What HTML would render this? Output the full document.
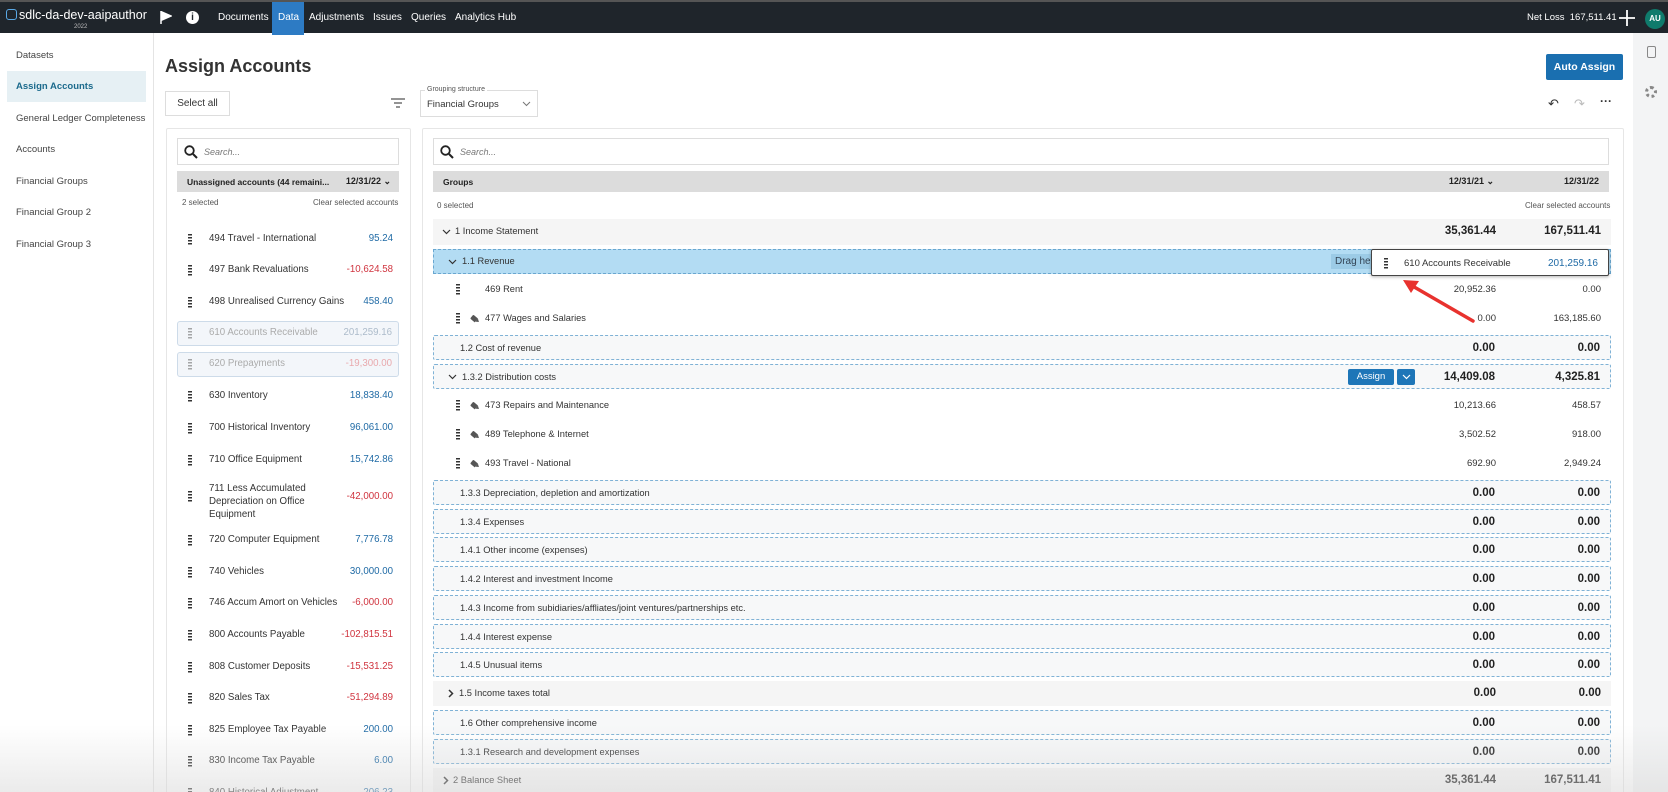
<!DOCTYPE html>
<html><head><meta charset="utf-8"><style>
*{box-sizing:border-box;margin:0;padding:0}
html,body{width:1668px;height:792px;overflow:hidden}
body{background:#fff;font-family:"Liberation Sans",sans-serif;color:#333;font-size:11px;white-space:nowrap}
#w{position:relative;width:1668px;height:792px;overflow:hidden}
.a{position:absolute}
.top{left:0;top:0;width:1668px;height:33px;background:#1f252b;border-top:2px solid #555}
.top .t{color:#fff;font-size:10px;top:10px}
.side{left:0;top:33px;width:154px;height:759px;background:#fff;border-right:1px solid #e4e4e4}
.side div{position:absolute;left:16px;font-size:9.5px;color:#444}
.rs{left:1633px;top:33px;width:35px;height:759px;background:#f3f4f5}
.panel{border:1px solid #e6e6e6;background:#fff;border-radius:2px}
.search{border:1px solid #ddd;background:#fff;height:27px}
.search span{position:absolute;left:26px;top:8px;font-style:italic;color:#777;font-size:9px}
.hdr{background:#dcdcdc;height:21px;font-weight:bold;font-size:8.5px;color:#222}
.grip{position:absolute;width:4px;height:11px;background:repeating-linear-gradient(#333 0 1.5px,transparent 1.5px 3px)}
.lrow{position:absolute;left:177px;width:222px;height:25px}
.lrow .n{position:absolute;left:32px;top:6px;font-size:9.7px;color:#333}
.lrow .v{position:absolute;right:6px;top:6px;font-size:9.7px}
.blue{color:#1f6aa5}.red{color:#d0343f}
.grow{position:absolute;left:433px;width:1178px;height:25px}
.grow .n{position:absolute;top:7px;font-size:9.3px;color:#333}
.grow .c1,.grow .c2{position:absolute;top:6px;font-size:11.5px;font-weight:bold;color:#222;text-align:right}
.grow .c1{right:115px}.grow .c2{right:10px}
.grow .s1,.grow .s2{position:absolute;top:7px;font-size:9.5px;color:#333}
.grow .s1{right:115px}.grow .s2{right:10px}
.dash{border:1px dashed #7fb2d6;border-radius:2px;background:#f7f8f9}
.gray{background:#f5f5f5}
.tag{position:absolute;width:6px;height:5px;background:#555;border-radius:1px 0 0 1px;transform:rotate(40deg)}
.tag:after{content:"";position:absolute;left:6px;top:0;border-left:3px solid #555;border-top:2.5px solid transparent;border-bottom:2.5px solid transparent}
.cv{position:absolute}
</style></head><body><div id="w">
<div class="a top">
 <div class="a" style="left:6px;top:7px;width:11px;height:11px;border:1.5px solid #5aa9e6;border-radius:3px"></div>
 <div class="a t" style="left:19px;top:6px;font-size:12.5px">sdlc-da-dev-aaipauthor</div>
 <div class="a" style="left:74px;top:22px;color:#bbb;font-size:6px">2022</div>
 <svg class="a" style="left:160px;top:9px" width="12" height="13"><path d="M1 0v13M2 1l9 4-9 4z" stroke="#fff" fill="#fff" stroke-width="1.5"/></svg>
 <div class="a" style="left:186px;top:9px;width:13px;height:13px;border-radius:50%;background:#fff;color:#1f252b;font-weight:bold;font-size:10px;text-align:center;line-height:13px">i</div>
 <div class="a t" style="left:218px">Documents</div>
 <div class="a" style="left:272px;top:0;width:32px;height:33px;background:#2d7bc4"></div>
 <div class="a t" style="left:278px">Data</div>
 <div class="a t" style="left:309px">Adjustments</div>
 <div class="a t" style="left:373px">Issues</div>
 <div class="a t" style="left:411px">Queries</div>
 <div class="a t" style="left:455px">Analytics Hub</div>
 <div class="a t" style="left:1527px;font-size:9.5px">Net Loss&nbsp;&nbsp;167,511.41</div>
 <svg class="a" style="left:1619px;top:8px" width="16" height="16"><path d="M8 0v16M0 8h16" stroke="#fff" stroke-width="1.8"/></svg>
 <div class="a" style="left:1645px;top:7px;width:20px;height:20px;border-radius:50%;background:#0f7b6c;color:#fff;font-size:8px;text-align:center;line-height:20px;font-weight:bold">AU</div>
</div>
<div class="a side">
 <div style="top:17px">Datasets</div>
 <div style="left:7px;top:38px;width:139px;height:31px;background:#e6f0f4"></div>
 <div style="top:48px;color:#1b6a8c;font-weight:bold">Assign Accounts</div>
 <div style="top:80px">General Ledger Completeness</div>
 <div style="top:111px">Accounts</div>
 <div style="top:143px">Financial Groups</div>
 <div style="top:174px">Financial Group 2</div>
 <div style="top:206px">Financial Group 3</div>
</div>
<div class="a rs">
 <div class="a" style="left:14px;top:13px;width:9px;height:12px;border:1.5px solid #888;border-radius:2px"></div>
 <div class="a" style="left:12px;top:53px;width:12px;height:12px;border-radius:50%;border:3px dotted #888"></div>
</div>
<div class="a" style="left:165px;top:56px;font-size:18px;font-weight:bold;color:#333">Assign Accounts</div>
<div class="a" style="left:165px;top:91px;width:65px;height:25px;border:1px solid #ddd;font-size:10px;text-align:center;line-height:23px">Select all</div>
<svg class="a" style="left:391px;top:98px" width="14" height="10"><path d="M0 1h14M3 5h8M5 9h4" stroke="#555" stroke-width="1.3"/></svg>
<div class="a" style="left:420px;top:90px;width:118px;height:27px;border:1px solid #ddd"></div>
<div class="a" style="left:425px;top:86px;font-size:7px;color:#555;background:#fff;padding:0 2px">Grouping structure</div>
<div class="a" style="left:427px;top:99px;font-size:9.5px">Financial Groups</div>
<svg class="a" style="left:522px;top:101px" width="9" height="6"><path d="M1 1l3.5 3.5L8 1" stroke="#777" fill="none"/></svg>
<div class="a" style="left:1546px;top:54px;width:77px;height:26px;background:#1a6fb0;border-radius:2px;color:#fff;font-weight:bold;font-size:10.5px;text-align:center;line-height:26px">Auto Assign</div>
<div class="a" style="left:1548px;top:96px;font-size:13px;color:#333">&#8630;</div>
<div class="a" style="left:1574px;top:96px;font-size:13px;color:#bbb">&#8631;</div>
<div class="a" style="left:1600px;top:94px;font-size:12px;color:#333;font-weight:bold">&middot;&middot;&middot;</div>

<div class="a panel" style="left:166px;top:128px;width:245px;height:680px"></div>
<div class="a search" style="left:177px;top:138px;width:222px"><svg class="a" style="left:6px;top:6px" width="14" height="14"><circle cx="5.5" cy="5.5" r="4.3" stroke="#222" stroke-width="1.8" fill="none"/><path d="M9 9l4 4" stroke="#222" stroke-width="2"/></svg><span>Search...</span></div>
<div class="a hdr" style="left:177px;top:171px;width:222px"><span class="a" style="left:10px;top:6px">Unassigned accounts (44 remaini...</span><span class="a" style="right:8px;top:5px;font-size:9px">12/31/22 &#8964;</span></div>
<div class="a" style="left:182px;top:198px;font-size:8px;color:#555">2 selected</div>
<div class="a" style="left:313px;top:198px;font-size:8px;color:#555">Clear selected accounts</div>

<div class="lrow" style="top:227px"><i class="grip" style="left:11px;top:7px"></i><span class="n">494 Travel - International</span><span class="v blue">95.24</span></div>
<div class="lrow" style="top:258px"><i class="grip" style="left:11px;top:7px"></i><span class="n">497 Bank Revaluations</span><span class="v red">-10,624.58</span></div>
<div class="lrow" style="top:290px"><i class="grip" style="left:11px;top:7px"></i><span class="n">498 Unrealised Currency Gains</span><span class="v blue">458.40</span></div>
<div class="lrow" style="top:321px;background:#eef3f8;border:1px solid #b9cde0;border-radius:3px;opacity:.7"><i class="grip" style="left:10px;top:6px;opacity:.6"></i><span class="n" style="left:31px;top:5px;color:#888">610 Accounts Receivable</span><span class="v blue" style="top:5px;color:#8a9fb5">201,259.16</span></div>
<div class="lrow" style="top:352px;background:#eef3f8;border:1px solid #b9cde0;border-radius:3px;opacity:.7"><i class="grip" style="left:10px;top:6px;opacity:.6"></i><span class="n" style="left:31px;top:5px;color:#888">620 Prepayments</span><span class="v" style="top:5px;color:#e0858b">-19,300.00</span></div>
<div class="lrow" style="top:384px"><i class="grip" style="left:11px;top:7px"></i><span class="n">630 Inventory</span><span class="v blue">18,838.40</span></div>
<div class="lrow" style="top:416px"><i class="grip" style="left:11px;top:7px"></i><span class="n">700 Historical Inventory</span><span class="v blue">96,061.00</span></div>
<div class="lrow" style="top:448px"><i class="grip" style="left:11px;top:7px"></i><span class="n">710 Office Equipment</span><span class="v blue">15,742.86</span></div>
<div class="lrow" style="top:482px;height:40px"><i class="grip" style="left:11px;top:9px"></i><span class="n" style="top:0;line-height:13px">711 Less Accumulated<br>Depreciation on Office<br>Equipment</span><span class="v red" style="top:9px">-42,000.00</span></div>
<div class="lrow" style="top:528px"><i class="grip" style="left:11px;top:7px"></i><span class="n">720 Computer Equipment</span><span class="v blue">7,776.78</span></div>
<div class="lrow" style="top:560px"><i class="grip" style="left:11px;top:7px"></i><span class="n">740 Vehicles</span><span class="v blue">30,000.00</span></div>
<div class="lrow" style="top:591px"><i class="grip" style="left:11px;top:7px"></i><span class="n">746 Accum Amort on Vehicles</span><span class="v red">-6,000.00</span></div>
<div class="lrow" style="top:623px"><i class="grip" style="left:11px;top:7px"></i><span class="n">800 Accounts Payable</span><span class="v red">-102,815.51</span></div>
<div class="lrow" style="top:655px"><i class="grip" style="left:11px;top:7px"></i><span class="n">808 Customer Deposits</span><span class="v red">-15,531.25</span></div>
<div class="lrow" style="top:686px"><i class="grip" style="left:11px;top:7px"></i><span class="n">820 Sales Tax</span><span class="v red">-51,294.89</span></div>
<div class="lrow" style="top:718px"><i class="grip" style="left:11px;top:7px"></i><span class="n">825 Employee Tax Payable</span><span class="v blue">200.00</span></div>
<div class="lrow" style="top:749px"><i class="grip" style="left:11px;top:7px"></i><span class="n">830 Income Tax Payable</span><span class="v blue">6.00</span></div>
<div class="lrow" style="top:781px"><i class="grip" style="left:11px;top:7px"></i><span class="n">840 Historical Adjustment</span><span class="v blue">206.23</span></div>

<div class="a panel" style="left:422px;top:128px;width:1202px;height:680px"></div>
<div class="a search" style="left:433px;top:138px;width:1176px"><svg class="a" style="left:6px;top:6px" width="14" height="14"><circle cx="5.5" cy="5.5" r="4.3" stroke="#222" stroke-width="1.8" fill="none"/><path d="M9 9l4 4" stroke="#222" stroke-width="2"/></svg><span>Search...</span></div>
<div class="a hdr" style="left:433px;top:171px;width:1176px"><span class="a" style="left:10px;top:6px">Groups</span><span class="a" style="right:115px;top:5px;font-size:9px">12/31/21 &#8964;</span><span class="a" style="right:10px;top:5px;font-size:9px">12/31/22</span></div>
<div class="a" style="left:437px;top:201px;font-size:8px;color:#555">0 selected</div>
<div class="a" style="left:1525px;top:201px;font-size:8px;color:#555">Clear selected accounts</div>

<div class="grow gray" style="top:219px;height:26px"><svg class="cv" style="left:9px;top:10px" width="9" height="6"><path d="M1 1l3.5 3.5L8 1" stroke="#333" fill="none" stroke-width="1.2"/></svg><span class="n" style="left:22px;top:7px">1 Income Statement</span><span class="c1" style="top:6px">35,361.44</span><span class="c2" style="top:6px">167,511.41</span></div>
<div class="grow" style="top:249px;background:#b3dcf3;border:1px dashed #6aa7d0"><svg class="cv" style="left:14px;top:9px" width="9" height="6"><path d="M1 1l3.5 3.5L8 1" stroke="#333" fill="none" stroke-width="1.2"/></svg><span class="n" style="left:28px;top:6px">1.1 Revenue</span><span class="a" style="left:897px;top:4px;padding:2px 4px;background:#9ccbe6;color:#345;font-size:10px">Drag here</span><span class="a" style="right:4px;top:6px;font-size:10px;color:#345">ns</span></div>
<div class="grow" style="top:277px"><i class="grip" style="left:23px;top:7px"></i><span class="n" style="left:52px">469 Rent</span><span class="s1">20,952.36</span><span class="s2">0.00</span></div>
<div class="grow" style="top:306px"><i class="grip" style="left:23px;top:7px"></i><i class="tag" style="left:38px;top:10px"></i><span class="n" style="left:52px">477 Wages and Salaries</span><span class="s1">0.00</span><span class="s2">163,185.60</span></div>
<div class="grow dash" style="top:335px"><span class="n" style="left:26px">1.2 Cost of revenue</span><span class="c1">0.00</span><span class="c2">0.00</span></div>
<div class="grow dash" style="top:364px"><svg class="cv" style="left:14px;top:9px" width="9" height="6"><path d="M1 1l3.5 3.5L8 1" stroke="#333" fill="none" stroke-width="1.2"/></svg><span class="n" style="left:28px">1.3.2 Distribution costs</span><span class="a" style="left:914px;top:4px;width:46px;height:16px;background:#1e76b8;color:#fff;font-size:9.5px;text-align:center;line-height:16px;border-radius:2px">Assign</span><span class="a" style="left:963px;top:4px;width:18px;height:16px;background:#1e76b8;border-radius:2px"><svg class="cv" style="left:5px;top:5px" width="9" height="6"><path d="M1 1l3.5 3.5L8 1" stroke="#fff" fill="none" stroke-width="1.2"/></svg></span><span class="c1">14,409.08</span><span class="c2">4,325.81</span></div>
<div class="grow" style="top:393px"><i class="grip" style="left:23px;top:7px"></i><i class="tag" style="left:38px;top:10px"></i><span class="n" style="left:52px">473 Repairs and Maintenance</span><span class="s1">10,213.66</span><span class="s2">458.57</span></div>
<div class="grow" style="top:422px"><i class="grip" style="left:23px;top:7px"></i><i class="tag" style="left:38px;top:10px"></i><span class="n" style="left:52px">489 Telephone &amp; Internet</span><span class="s1">3,502.52</span><span class="s2">918.00</span></div>
<div class="grow" style="top:451px"><i class="grip" style="left:23px;top:7px"></i><i class="tag" style="left:38px;top:10px"></i><span class="n" style="left:52px">493 Travel - National</span><span class="s1">692.90</span><span class="s2">2,949.24</span></div>
<div class="grow dash" style="top:480px"><span class="n" style="left:26px">1.3.3 Depreciation, depletion and amortization</span><span class="c1">0.00</span><span class="c2">0.00</span></div>
<div class="grow dash" style="top:509px"><span class="n" style="left:26px">1.3.4 Expenses</span><span class="c1">0.00</span><span class="c2">0.00</span></div>
<div class="grow dash" style="top:537px"><span class="n" style="left:26px">1.4.1 Other income (expenses)</span><span class="c1">0.00</span><span class="c2">0.00</span></div>
<div class="grow dash" style="top:566px"><span class="n" style="left:26px">1.4.2 Interest and investment Income</span><span class="c1">0.00</span><span class="c2">0.00</span></div>
<div class="grow dash" style="top:595px"><span class="n" style="left:26px">1.4.3 Income from subidiaries/affliates/joint ventures/partnerships etc.</span><span class="c1">0.00</span><span class="c2">0.00</span></div>
<div class="grow dash" style="top:624px"><span class="n" style="left:26px">1.4.4 Interest expense</span><span class="c1">0.00</span><span class="c2">0.00</span></div>
<div class="grow dash" style="top:652px"><span class="n" style="left:26px">1.4.5 Unusual items</span><span class="c1">0.00</span><span class="c2">0.00</span></div>
<div class="grow gray" style="top:681px"><svg class="cv" style="left:15px;top:8px" width="6" height="9"><path d="M1 1l3.5 3.5L1 8" stroke="#333" fill="none" stroke-width="1.5"/></svg><span class="n" style="left:26px">1.5 Income taxes total</span><span class="c1">0.00</span><span class="c2">0.00</span></div>
<div class="grow dash" style="top:710px"><span class="n" style="left:26px">1.6 Other comprehensive income</span><span class="c1">0.00</span><span class="c2">0.00</span></div>
<div class="grow dash" style="top:739px"><span class="n" style="left:26px">1.3.1 Research and development expenses</span><span class="c1">0.00</span><span class="c2">0.00</span></div>
<div class="grow gray" style="top:768px"><svg class="cv" style="left:10px;top:8px" width="6" height="9"><path d="M1 1l3.5 3.5L1 8" stroke="#333" fill="none" stroke-width="1.5"/></svg><span class="n" style="left:20px">2 Balance Sheet</span><span class="c1">35,361.44</span><span class="c2">167,511.41</span></div>

<div class="a" style="left:1371px;top:249px;width:238px;height:27px;background:#fff;border:1px solid #444;border-radius:2px;box-shadow:0 1px 3px rgba(0,0,0,.3)"><i class="grip" style="left:12px;top:8px"></i><span class="a" style="left:32px;top:8px;font-size:9.5px">610 Accounts Receivable</span><span class="a blue" style="right:10px;top:8px;font-size:10px">201,259.16</span></div>
<svg class="a" style="left:1395px;top:276px" width="85" height="50"><path d="M78 45L14 8" stroke="#e8322e" stroke-width="3.5" stroke-linecap="round"/><path d="M8 4l16 1-8 12z" fill="#e8322e"/></svg>
<div class="a" style="left:0;top:725px;width:1668px;height:67px;background:linear-gradient(rgba(230,230,230,0),rgba(215,215,215,.5));pointer-events:none"></div>
</div></body></html>
